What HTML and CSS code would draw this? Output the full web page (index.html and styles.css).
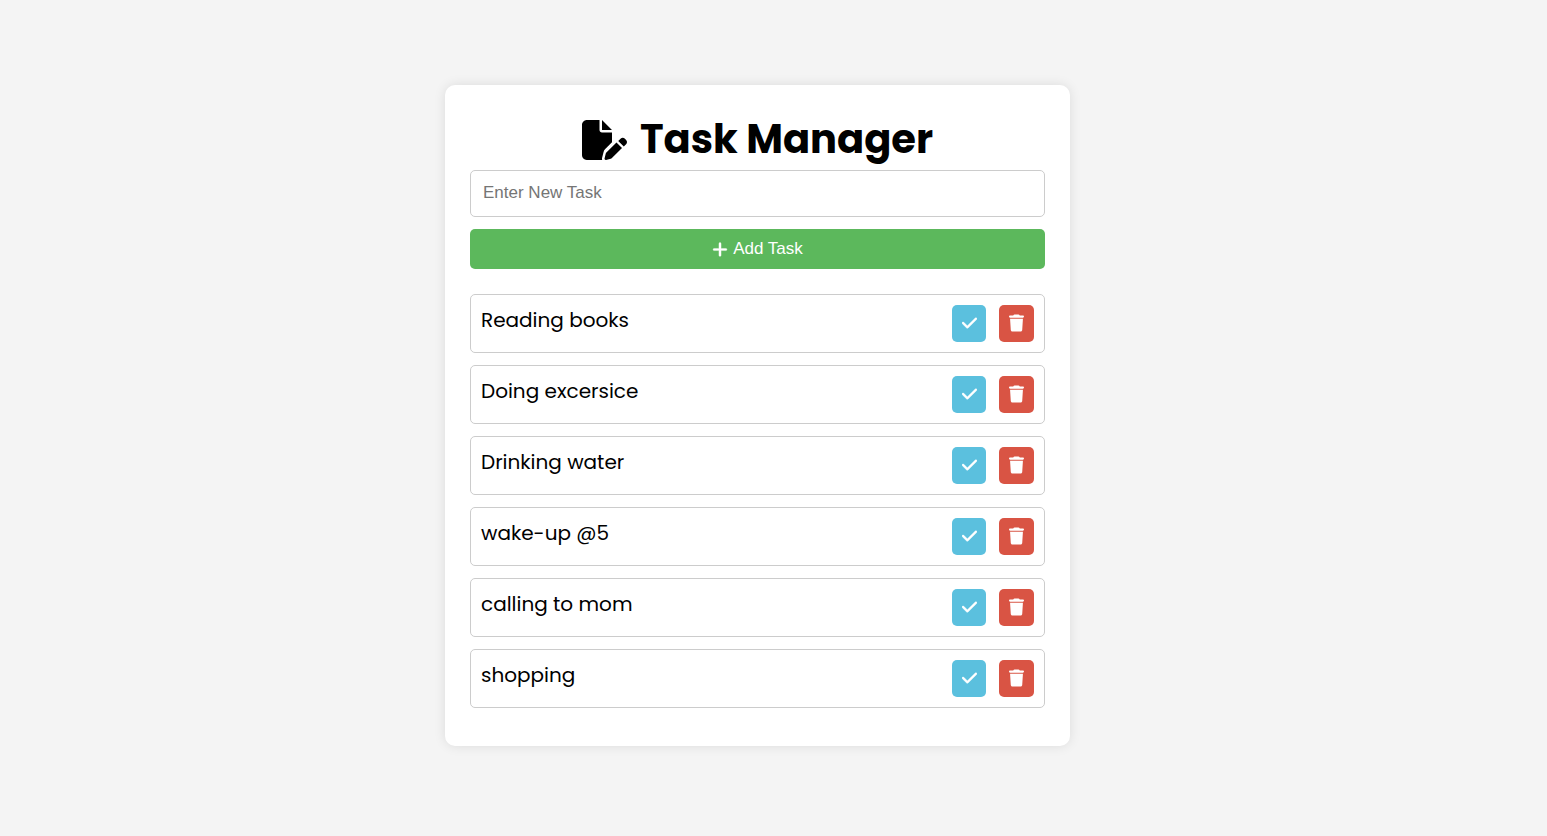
FILE: index.html
```html
<!DOCTYPE html>
<html lang="en">
<head>
<meta charset="utf-8">
<meta name="viewport" content="width=device-width, initial-scale=1">
<title>Task Manager</title>
<link rel="stylesheet" href="styles.css">
</head>
<body>
<svg class="sprite" aria-hidden="true">
  <symbol id="check" viewBox="0 0 448 512"><path stroke="currentColor" stroke-width="10" d="M438.600 105.400c12.500 12.500 12.500 32.800 0 45.300l-256 256c-12.500 12.500-32.800 12.500-45.300 0l-128-128c-12.500-12.500-12.500-32.800 0-45.300s32.800-12.500 45.300 0L160 338.700 393.400 105.400c12.500-12.500 32.800-12.500 45.300 0z"/></symbol>
  <symbol id="trash" viewBox="0 0 448 512"><path d="M135.200 17.700L128 32H32C14.300 32 0 46.300 0 64s14.300 32 32 32h384c17.700 0 32-14.300 32-32s-14.300-32-32-32h-96l-7.200-14.300C307.400 6.800 296.300 0 284.200 0H163.800c-12.100 0-23.200 6.800-28.600 17.700zM416 128H32l21.200 339c1.600 25.300 22.600 45 47.900 45h245.800c25.300 0 46.300-19.700 47.900-45L416 128z"/></symbol>
</svg>
<main class="card">
  <h1 class="title">
    <svg class="title-icon" viewBox="0 0 576 512" aria-hidden="true"><path d="M0 64C0 28.700 28.700 0 64 0h160v128c0 17.700 14.300 32 32 32h128v125.700l-86.800 86.800c-10.300 10.300-17.500 23.100-21 37.200l-18.700 74.900c-2.300 9.200-1.800 18.800 1.300 27.500H64c-35.300 0-64-28.700-64-64V64zm384 64H256V0l128 128zm165.800 112.100l14.400 14.400c15.600 15.600 15.600 40.900 0 56.600l-29.400 29.400-71-71 29.400-29.400c15.600-15.600 40.900-15.600 56.600 0zM311.900 417L441.100 287.800l71 71L382.900 487.900c-4.100 4.100-9.200 7-14.900 8.400l-60.100 15c-5.500 1.400-11.200-.2-15.200-4.200s-5.600-9.700-4.200-15.200l15-60.100c1.400-5.600 4.300-10.800 8.400-14.800z"/></svg>
    <span>Task Manager</span>
  </h1>
  <form class="task-form">
    <input class="task-input" type="text" placeholder="Enter New Task" aria-label="New task">
    <button class="add-button" type="button">
      <svg class="plus" viewBox="0 0 448 512" aria-hidden="true"><path stroke="currentColor" stroke-width="10" d="M256 80c0-17.700-14.300-32-32-32s-32 14.300-32 32v144H48c-17.700 0-32 14.300-32 32s14.300 32 32 32h144v144c0 17.700 14.300 32 32 32s32-14.300 32-32V288h144c17.700 0 32-14.300 32-32s-14.300-32-32-32H256V80z"/></svg>
      Add Task
    </button>
  </form>
  <ul class="tasks">
    <li class="task"><span class="task-name">Reading books</span><button class="action done" type="button" aria-label="Complete Reading books"><svg><use href="#check"/></svg></button><button class="action delete" type="button" aria-label="Delete Reading books"><svg><use href="#trash"/></svg></button></li>
    <li class="task"><span class="task-name">Doing excersice</span><button class="action done" type="button" aria-label="Complete Doing excersice"><svg><use href="#check"/></svg></button><button class="action delete" type="button" aria-label="Delete Doing excersice"><svg><use href="#trash"/></svg></button></li>
    <li class="task"><span class="task-name">Drinking water</span><button class="action done" type="button" aria-label="Complete Drinking water"><svg><use href="#check"/></svg></button><button class="action delete" type="button" aria-label="Delete Drinking water"><svg><use href="#trash"/></svg></button></li>
    <li class="task"><span class="task-name">wake-up @5</span><button class="action done" type="button" aria-label="Complete wake-up @5"><svg><use href="#check"/></svg></button><button class="action delete" type="button" aria-label="Delete wake-up @5"><svg><use href="#trash"/></svg></button></li>
    <li class="task"><span class="task-name">calling to mom</span><button class="action done" type="button" aria-label="Complete calling to mom"><svg><use href="#check"/></svg></button><button class="action delete" type="button" aria-label="Delete calling to mom"><svg><use href="#trash"/></svg></button></li>
    <li class="task"><span class="task-name">shopping</span><button class="action done" type="button" aria-label="Complete shopping"><svg><use href="#check"/></svg></button><button class="action delete" type="button" aria-label="Delete shopping"><svg><use href="#trash"/></svg></button></li>
  </ul>
</main>
</body>
</html>
```
FILE: styles.css
```css
* {
  box-sizing: border-box;
}

body {
  margin: 0;
  min-height: 100vh;
  padding: 24px 48px 29px 16px;
  display: flex;
  align-items: center;
  justify-content: center;
  background: #f4f4f4;
  color: #000;
  font-family: Poppins, Inter, sans-serif;
}

svg {
  fill: currentColor;
}

.sprite {
  display: none;
}

.card {
  width: 100%;
  max-width: 625px;
  padding: 24px 25px 38px;
  border-radius: 10px;
  background: #fff;
  box-shadow: 0 0 12px rgba(0, 0, 0, 0.1);
}

.title {
  display: flex;
  align-items: center;
  justify-content: center;
  gap: 13px;
  margin: 0;
  font-size: 40px;
  line-height: 61px;
  font-weight: 700;
}

.title-icon {
  width: 45px;
  height: 40px;
}

.task-form {
  display: flex;
  flex-direction: column;
  gap: 12px;
}

.task-input,
.add-button {
  width: 100%;
  border-radius: 5px;
  font-family: "Liberation Sans", Arial, sans-serif;
  font-size: 17px;
  line-height: 20px;
}

.task-input {
  padding: 12px 12px 13px;
  border: 1px solid #ccc;
}

.task-input::placeholder {
  color: #757575;
}

.add-button {
  display: flex;
  align-items: center;
  justify-content: center;
  gap: 5px;
  padding: 10px;
  border: 0;
  background: #5cb85c;
  color: #fff;
}

.plus {
  width: 16px;
  height: 17px;
}

.tasks {
  display: flex;
  flex-direction: column;
  gap: 12px;
  margin: 25px 0 0;
  padding: 0;
  list-style: none;
}

.task {
  display: flex;
  align-items: flex-start;
  gap: 13px;
  padding: 10px;
  border: 1px solid #ccc;
  border-radius: 5px;
}

.task-name {
  flex: 1;
  font-size: 20px;
  line-height: 30px;
}

.action {
  display: flex;
  justify-content: center;
  width: 35px;
  height: 37px;
  padding: 9px 0;
  border: 0;
  border-radius: 5px;
  color: #fff;
}

.action svg {
  width: 15px;
  height: 18px;
}

.done {
  width: 34px;
  background: #5bc0de;
}

.delete {
  background: #d95444;
}
```
